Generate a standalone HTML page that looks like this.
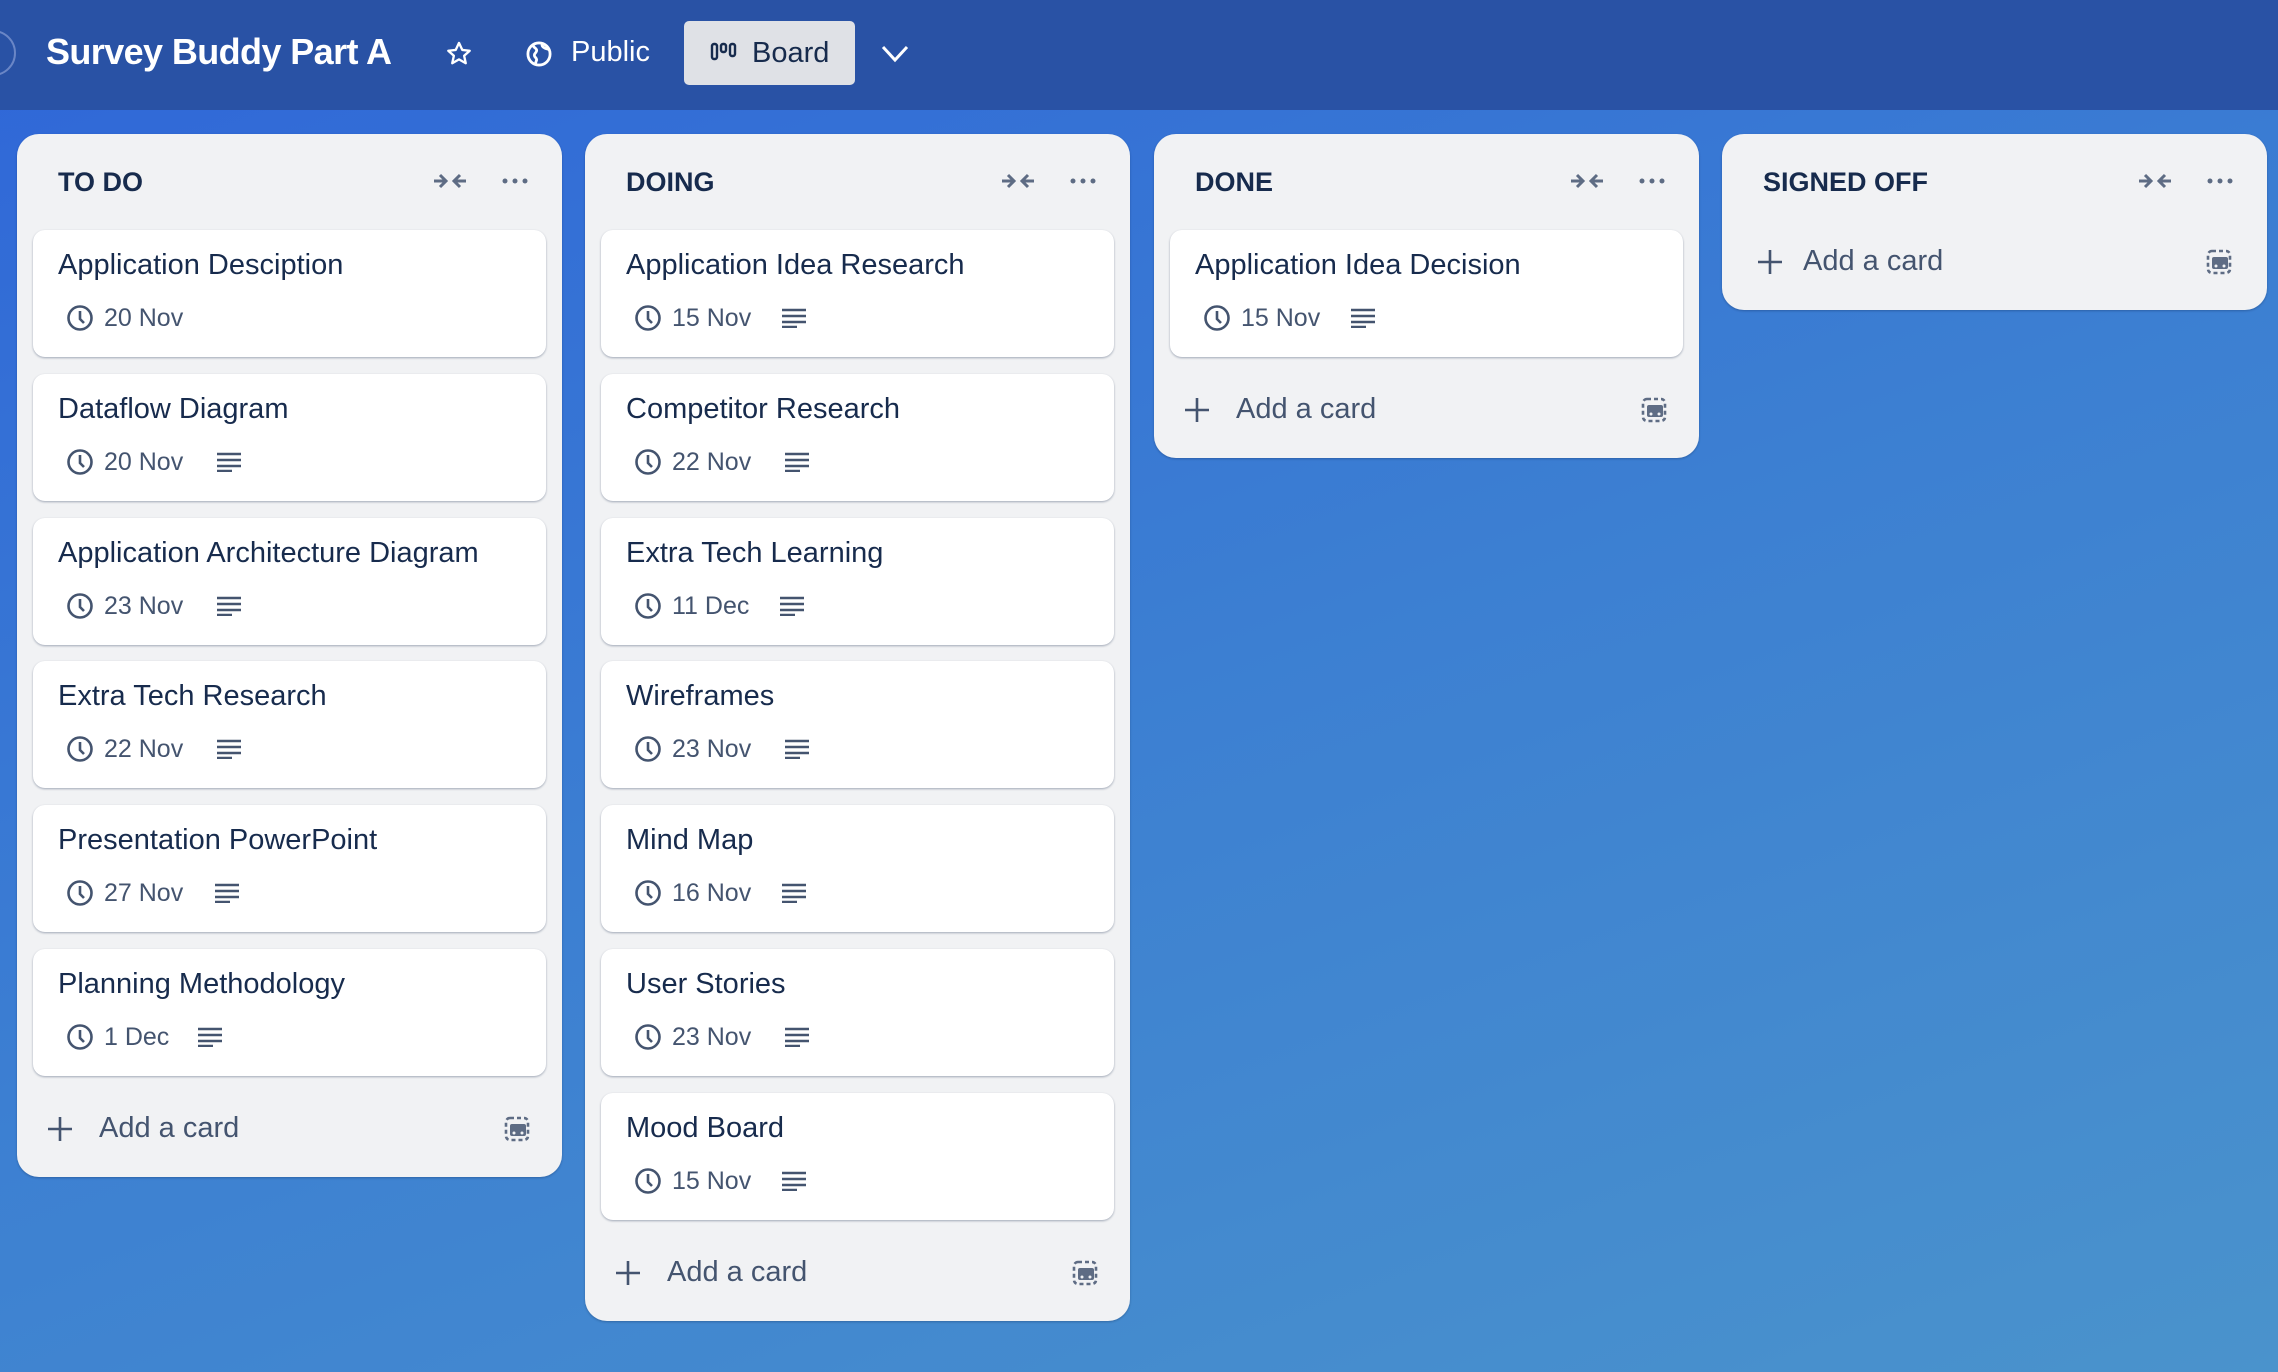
<!DOCTYPE html>
<html><head><meta charset="utf-8">
<style>
*{margin:0;padding:0;box-sizing:border-box}
body{width:2278px;height:1372px;overflow:hidden;font-family:"Liberation Sans",sans-serif;background:linear-gradient(160deg,#2f66d8 0%,#3c7fd2 50%,#4a93cc 100%);position:relative}
.hdr{position:absolute;left:0;top:0;width:2278px;height:110px;background:#2952a5}
.circ{position:absolute;left:-30px;top:30px;width:46px;height:46px;border-radius:50%;border:2px solid #6a86c6}
.title{position:absolute;left:46px;top:31px;font-size:36px;font-weight:bold;color:#fff;letter-spacing:-0.6px}
.hico{position:absolute}
.pub{position:absolute;left:571px;top:36px;font-size:29px;color:#fff}
.boardbtn{position:absolute;left:684px;top:21px;width:171px;height:64px;background:#dfe1e6;border-radius:5px}
.boardbtn span{position:absolute;left:68px;top:16px;font-size:29px;color:#172b4d}
.list{position:absolute;width:545px;background:#f1f2f4;border-radius:22px;box-shadow:0 1px 2px rgba(9,30,66,.3)}
.lt{position:absolute;left:41px;top:33px;font-size:27px;font-weight:bold;color:#172b4d}
.lic{position:absolute;top:36px}
.card{position:absolute;left:16px;width:513px;height:127px;background:#fff;border-radius:12px;box-shadow:0 1px 2px rgba(9,30,66,.35)}
.ct{position:absolute;left:25px;top:19px;font-size:29px;color:#172b4d}
.cd{position:absolute;left:33px;top:74px;height:28px}
.cd span{position:absolute;left:38px;top:0px;font-size:25px;color:#44546f;white-space:nowrap}
.add{position:absolute;left:0;width:545px;height:50px}
.add span{position:absolute;left:82px;top:8px;font-size:29px;color:#44546f}
</style></head><body>
<div class="hdr">
<div class="circ"></div>
<div class="title">Survey Buddy Part A</div>
<svg class="hico" style="left:445px;top:40px" width="28" height="28" viewBox="0 0 24 24"><path d="M12 2.5l2.8 6 6.4.7-4.8 4.3 1.4 6.4L12 16.6 6.2 19.9l1.4-6.4L2.8 9.2l6.4-.7z" fill="none" stroke="#fff" stroke-width="2" stroke-linejoin="round"/></svg>
<svg class="hico" style="left:525px;top:40px" width="28" height="28" viewBox="0 0 24 24"><circle cx="12" cy="12" r="9.5" fill="none" stroke="#fff" stroke-width="2.4"/><path d="M7 5c1 2 3 2 3 4s-2 2-2 4 2 2 2 4l-1 3M15 3c-1 2 0 3 2 4s3 0 4 2" fill="none" stroke="#fff" stroke-width="2.4"/></svg>
<div class="pub">Public</div>
<div class="boardbtn">
<svg style="position:absolute;left:26px;top:20px" width="28" height="22" viewBox="0 0 28 22"><rect x="2" y="3" width="5" height="15" rx="2" fill="none" stroke="#172b4d" stroke-width="2.4"/><rect x="11" y="3" width="5" height="8" rx="2" fill="none" stroke="#172b4d" stroke-width="2.4"/><rect x="20" y="3" width="5" height="12" rx="2" fill="none" stroke="#172b4d" stroke-width="2.4"/></svg>
<span>Board</span></div>
<svg class="hico" style="left:880px;top:42px" width="30" height="24" viewBox="0 0 30 24"><path d="M3 5l12 13L27 5" fill="none" stroke="#fff" stroke-width="3"/></svg>
</div>

<!-- TO DO -->
<div class="list" style="left:17px;top:134px;height:1043px">
<div class="lt">TO DO</div>
<svg class="lic" style="left:415px" width="36" height="22" viewBox="0 0 36 22"><path d="M2 11h11M8 5l6 6-6 6M34 11H23M28 5l-6 6 6 6" fill="none" stroke="#5e6c84" stroke-width="3"/></svg>
<svg class="lic" style="left:484px" width="28" height="22" viewBox="0 0 28 22"><circle cx="4" cy="11" r="2.5" fill="#5e6c84"/><circle cx="14" cy="11" r="2.5" fill="#5e6c84"/><circle cx="24" cy="11" r="2.5" fill="#5e6c84"/></svg>
<div class="card" style="top:96px"><div class="ct">Application Desciption</div><div class="cd"><svg width="28" height="28" viewBox="0 0 28 28"><circle cx="14" cy="14" r="11.5" fill="none" stroke="#44546f" stroke-width="2.6"/><path d="M14 7v8l4 4" fill="none" stroke="#44546f" stroke-width="2.6"/></svg><span>20 Nov</span></div></div>
<div class="card" style="top:240px"><div class="ct">Dataflow Diagram</div><div class="cd"><svg width="28" height="28" viewBox="0 0 28 28"><circle cx="14" cy="14" r="11.5" fill="none" stroke="#44546f" stroke-width="2.6"/><path d="M14 7v8l4 4" fill="none" stroke="#44546f" stroke-width="2.6"/></svg><span>20 Nov</span><svg style="position:absolute;left:150px;top:4px" width="26" height="20" viewBox="0 0 26 20"><path d="M1 2h24M1 8h24M1 14h24M1 19h15" stroke="#44546f" stroke-width="2.6"/></svg></div></div>
<div class="card" style="top:384px"><div class="ct">Application Architecture Diagram</div><div class="cd"><svg width="28" height="28" viewBox="0 0 28 28"><circle cx="14" cy="14" r="11.5" fill="none" stroke="#44546f" stroke-width="2.6"/><path d="M14 7v8l4 4" fill="none" stroke="#44546f" stroke-width="2.6"/></svg><span>23 Nov</span><svg style="position:absolute;left:150px;top:4px" width="26" height="20" viewBox="0 0 26 20"><path d="M1 2h24M1 8h24M1 14h24M1 19h15" stroke="#44546f" stroke-width="2.6"/></svg></div></div>
<div class="card" style="top:527px"><div class="ct">Extra Tech Research</div><div class="cd"><svg width="28" height="28" viewBox="0 0 28 28"><circle cx="14" cy="14" r="11.5" fill="none" stroke="#44546f" stroke-width="2.6"/><path d="M14 7v8l4 4" fill="none" stroke="#44546f" stroke-width="2.6"/></svg><span>22 Nov</span><svg style="position:absolute;left:150px;top:4px" width="26" height="20" viewBox="0 0 26 20"><path d="M1 2h24M1 8h24M1 14h24M1 19h15" stroke="#44546f" stroke-width="2.6"/></svg></div></div>
<div class="card" style="top:671px"><div class="ct">Presentation PowerPoint</div><div class="cd"><svg width="28" height="28" viewBox="0 0 28 28"><circle cx="14" cy="14" r="11.5" fill="none" stroke="#44546f" stroke-width="2.6"/><path d="M14 7v8l4 4" fill="none" stroke="#44546f" stroke-width="2.6"/></svg><span>27 Nov</span><svg style="position:absolute;left:148px;top:4px" width="26" height="20" viewBox="0 0 26 20"><path d="M1 2h24M1 8h24M1 14h24M1 19h15" stroke="#44546f" stroke-width="2.6"/></svg></div></div>
<div class="card" style="top:815px"><div class="ct">Planning Methodology</div><div class="cd"><svg width="28" height="28" viewBox="0 0 28 28"><circle cx="14" cy="14" r="11.5" fill="none" stroke="#44546f" stroke-width="2.6"/><path d="M14 7v8l4 4" fill="none" stroke="#44546f" stroke-width="2.6"/></svg><span>1 Dec</span><svg style="position:absolute;left:131px;top:4px" width="26" height="20" viewBox="0 0 26 20"><path d="M1 2h24M1 8h24M1 14h24M1 19h15" stroke="#44546f" stroke-width="2.6"/></svg></div></div>
<div class="add" style="top:970px"><svg style="position:absolute;left:30px;top:12px" width="26" height="26" viewBox="0 0 26 26"><path d="M13 1v24M1 13h24" stroke="#44546f" stroke-width="2.6"/></svg><span>Add a card</span><svg style="position:absolute;left:487px;top:12px" width="26" height="26" viewBox="0 0 26 26"><rect x="2" y="2" width="22" height="22" rx="4" fill="none" stroke="#5e6c84" stroke-width="2.6" stroke-dasharray="4 3"/><rect x="6" y="8" width="16" height="12" rx="2" fill="#5e6c84"/><circle cx="10" cy="17" r="1.5" fill="#f1f2f4"/><circle cx="18" cy="17" r="1.5" fill="#f1f2f4"/></svg></div>
</div>

<!-- DOING -->
<div class="list" style="left:585px;top:134px;height:1187px">
<div class="lt">DOING</div>
<svg class="lic" style="left:415px" width="36" height="22" viewBox="0 0 36 22"><path d="M2 11h11M8 5l6 6-6 6M34 11H23M28 5l-6 6 6 6" fill="none" stroke="#5e6c84" stroke-width="3"/></svg>
<svg class="lic" style="left:484px" width="28" height="22" viewBox="0 0 28 22"><circle cx="4" cy="11" r="2.5" fill="#5e6c84"/><circle cx="14" cy="11" r="2.5" fill="#5e6c84"/><circle cx="24" cy="11" r="2.5" fill="#5e6c84"/></svg>
<div class="card" style="top:96px"><div class="ct">Application Idea Research</div><div class="cd"><svg width="28" height="28" viewBox="0 0 28 28"><circle cx="14" cy="14" r="11.5" fill="none" stroke="#44546f" stroke-width="2.6"/><path d="M14 7v8l4 4" fill="none" stroke="#44546f" stroke-width="2.6"/></svg><span>15 Nov</span><svg style="position:absolute;left:147px;top:4px" width="26" height="20" viewBox="0 0 26 20"><path d="M1 2h24M1 8h24M1 14h24M1 19h15" stroke="#44546f" stroke-width="2.6"/></svg></div></div>
<div class="card" style="top:240px"><div class="ct">Competitor Research</div><div class="cd"><svg width="28" height="28" viewBox="0 0 28 28"><circle cx="14" cy="14" r="11.5" fill="none" stroke="#44546f" stroke-width="2.6"/><path d="M14 7v8l4 4" fill="none" stroke="#44546f" stroke-width="2.6"/></svg><span>22 Nov</span><svg style="position:absolute;left:150px;top:4px" width="26" height="20" viewBox="0 0 26 20"><path d="M1 2h24M1 8h24M1 14h24M1 19h15" stroke="#44546f" stroke-width="2.6"/></svg></div></div>
<div class="card" style="top:384px"><div class="ct">Extra Tech Learning</div><div class="cd"><svg width="28" height="28" viewBox="0 0 28 28"><circle cx="14" cy="14" r="11.5" fill="none" stroke="#44546f" stroke-width="2.6"/><path d="M14 7v8l4 4" fill="none" stroke="#44546f" stroke-width="2.6"/></svg><span>11 Dec</span><svg style="position:absolute;left:145px;top:4px" width="26" height="20" viewBox="0 0 26 20"><path d="M1 2h24M1 8h24M1 14h24M1 19h15" stroke="#44546f" stroke-width="2.6"/></svg></div></div>
<div class="card" style="top:527px"><div class="ct">Wireframes</div><div class="cd"><svg width="28" height="28" viewBox="0 0 28 28"><circle cx="14" cy="14" r="11.5" fill="none" stroke="#44546f" stroke-width="2.6"/><path d="M14 7v8l4 4" fill="none" stroke="#44546f" stroke-width="2.6"/></svg><span>23 Nov</span><svg style="position:absolute;left:150px;top:4px" width="26" height="20" viewBox="0 0 26 20"><path d="M1 2h24M1 8h24M1 14h24M1 19h15" stroke="#44546f" stroke-width="2.6"/></svg></div></div>
<div class="card" style="top:671px"><div class="ct">Mind Map</div><div class="cd"><svg width="28" height="28" viewBox="0 0 28 28"><circle cx="14" cy="14" r="11.5" fill="none" stroke="#44546f" stroke-width="2.6"/><path d="M14 7v8l4 4" fill="none" stroke="#44546f" stroke-width="2.6"/></svg><span>16 Nov</span><svg style="position:absolute;left:147px;top:4px" width="26" height="20" viewBox="0 0 26 20"><path d="M1 2h24M1 8h24M1 14h24M1 19h15" stroke="#44546f" stroke-width="2.6"/></svg></div></div>
<div class="card" style="top:815px"><div class="ct">User Stories</div><div class="cd"><svg width="28" height="28" viewBox="0 0 28 28"><circle cx="14" cy="14" r="11.5" fill="none" stroke="#44546f" stroke-width="2.6"/><path d="M14 7v8l4 4" fill="none" stroke="#44546f" stroke-width="2.6"/></svg><span>23 Nov</span><svg style="position:absolute;left:150px;top:4px" width="26" height="20" viewBox="0 0 26 20"><path d="M1 2h24M1 8h24M1 14h24M1 19h15" stroke="#44546f" stroke-width="2.6"/></svg></div></div>
<div class="card" style="top:959px"><div class="ct">Mood Board</div><div class="cd"><svg width="28" height="28" viewBox="0 0 28 28"><circle cx="14" cy="14" r="11.5" fill="none" stroke="#44546f" stroke-width="2.6"/><path d="M14 7v8l4 4" fill="none" stroke="#44546f" stroke-width="2.6"/></svg><span>15 Nov</span><svg style="position:absolute;left:147px;top:4px" width="26" height="20" viewBox="0 0 26 20"><path d="M1 2h24M1 8h24M1 14h24M1 19h15" stroke="#44546f" stroke-width="2.6"/></svg></div></div>
<div class="add" style="top:1114px"><svg style="position:absolute;left:30px;top:12px" width="26" height="26" viewBox="0 0 26 26"><path d="M13 1v24M1 13h24" stroke="#44546f" stroke-width="2.6"/></svg><span>Add a card</span><svg style="position:absolute;left:487px;top:12px" width="26" height="26" viewBox="0 0 26 26"><rect x="2" y="2" width="22" height="22" rx="4" fill="none" stroke="#5e6c84" stroke-width="2.6" stroke-dasharray="4 3"/><rect x="6" y="8" width="16" height="12" rx="2" fill="#5e6c84"/><circle cx="10" cy="17" r="1.5" fill="#f1f2f4"/><circle cx="18" cy="17" r="1.5" fill="#f1f2f4"/></svg></div>
</div>

<!-- DONE -->
<div class="list" style="left:1154px;top:134px;height:324px">
<div class="lt">DONE</div>
<svg class="lic" style="left:415px" width="36" height="22" viewBox="0 0 36 22"><path d="M2 11h11M8 5l6 6-6 6M34 11H23M28 5l-6 6 6 6" fill="none" stroke="#5e6c84" stroke-width="3"/></svg>
<svg class="lic" style="left:484px" width="28" height="22" viewBox="0 0 28 22"><circle cx="4" cy="11" r="2.5" fill="#5e6c84"/><circle cx="14" cy="11" r="2.5" fill="#5e6c84"/><circle cx="24" cy="11" r="2.5" fill="#5e6c84"/></svg>
<div class="card" style="top:96px"><div class="ct">Application Idea Decision</div><div class="cd"><svg width="28" height="28" viewBox="0 0 28 28"><circle cx="14" cy="14" r="11.5" fill="none" stroke="#44546f" stroke-width="2.6"/><path d="M14 7v8l4 4" fill="none" stroke="#44546f" stroke-width="2.6"/></svg><span>15 Nov</span><svg style="position:absolute;left:147px;top:4px" width="26" height="20" viewBox="0 0 26 20"><path d="M1 2h24M1 8h24M1 14h24M1 19h15" stroke="#44546f" stroke-width="2.6"/></svg></div></div>
<div class="add" style="top:251px"><svg style="position:absolute;left:30px;top:12px" width="26" height="26" viewBox="0 0 26 26"><path d="M13 1v24M1 13h24" stroke="#44546f" stroke-width="2.6"/></svg><span>Add a card</span><svg style="position:absolute;left:487px;top:12px" width="26" height="26" viewBox="0 0 26 26"><rect x="2" y="2" width="22" height="22" rx="4" fill="none" stroke="#5e6c84" stroke-width="2.6" stroke-dasharray="4 3"/><rect x="6" y="8" width="16" height="12" rx="2" fill="#5e6c84"/><circle cx="10" cy="17" r="1.5" fill="#f1f2f4"/><circle cx="18" cy="17" r="1.5" fill="#f1f2f4"/></svg></div>
</div>

<!-- SIGNED OFF -->
<div class="list" style="left:1722px;top:134px;height:176px">
<div class="lt">SIGNED OFF</div>
<svg class="lic" style="left:415px" width="36" height="22" viewBox="0 0 36 22"><path d="M2 11h11M8 5l6 6-6 6M34 11H23M28 5l-6 6 6 6" fill="none" stroke="#5e6c84" stroke-width="3"/></svg>
<svg class="lic" style="left:484px" width="28" height="22" viewBox="0 0 28 22"><circle cx="4" cy="11" r="2.5" fill="#5e6c84"/><circle cx="14" cy="11" r="2.5" fill="#5e6c84"/><circle cx="24" cy="11" r="2.5" fill="#5e6c84"/></svg>
<div class="add" style="top:103px"><svg style="position:absolute;left:35px;top:12px" width="26" height="26" viewBox="0 0 26 26"><path d="M13 1v24M1 13h24" stroke="#44546f" stroke-width="2.6"/></svg><span style="left:81px">Add a card</span><svg style="position:absolute;left:484px;top:12px" width="26" height="26" viewBox="0 0 26 26"><rect x="2" y="2" width="22" height="22" rx="4" fill="none" stroke="#5e6c84" stroke-width="2.6" stroke-dasharray="4 3"/><rect x="6" y="8" width="16" height="12" rx="2" fill="#5e6c84"/><circle cx="10" cy="17" r="1.5" fill="#f1f2f4"/><circle cx="18" cy="17" r="1.5" fill="#f1f2f4"/></svg></div>
</div>
</body></html>
